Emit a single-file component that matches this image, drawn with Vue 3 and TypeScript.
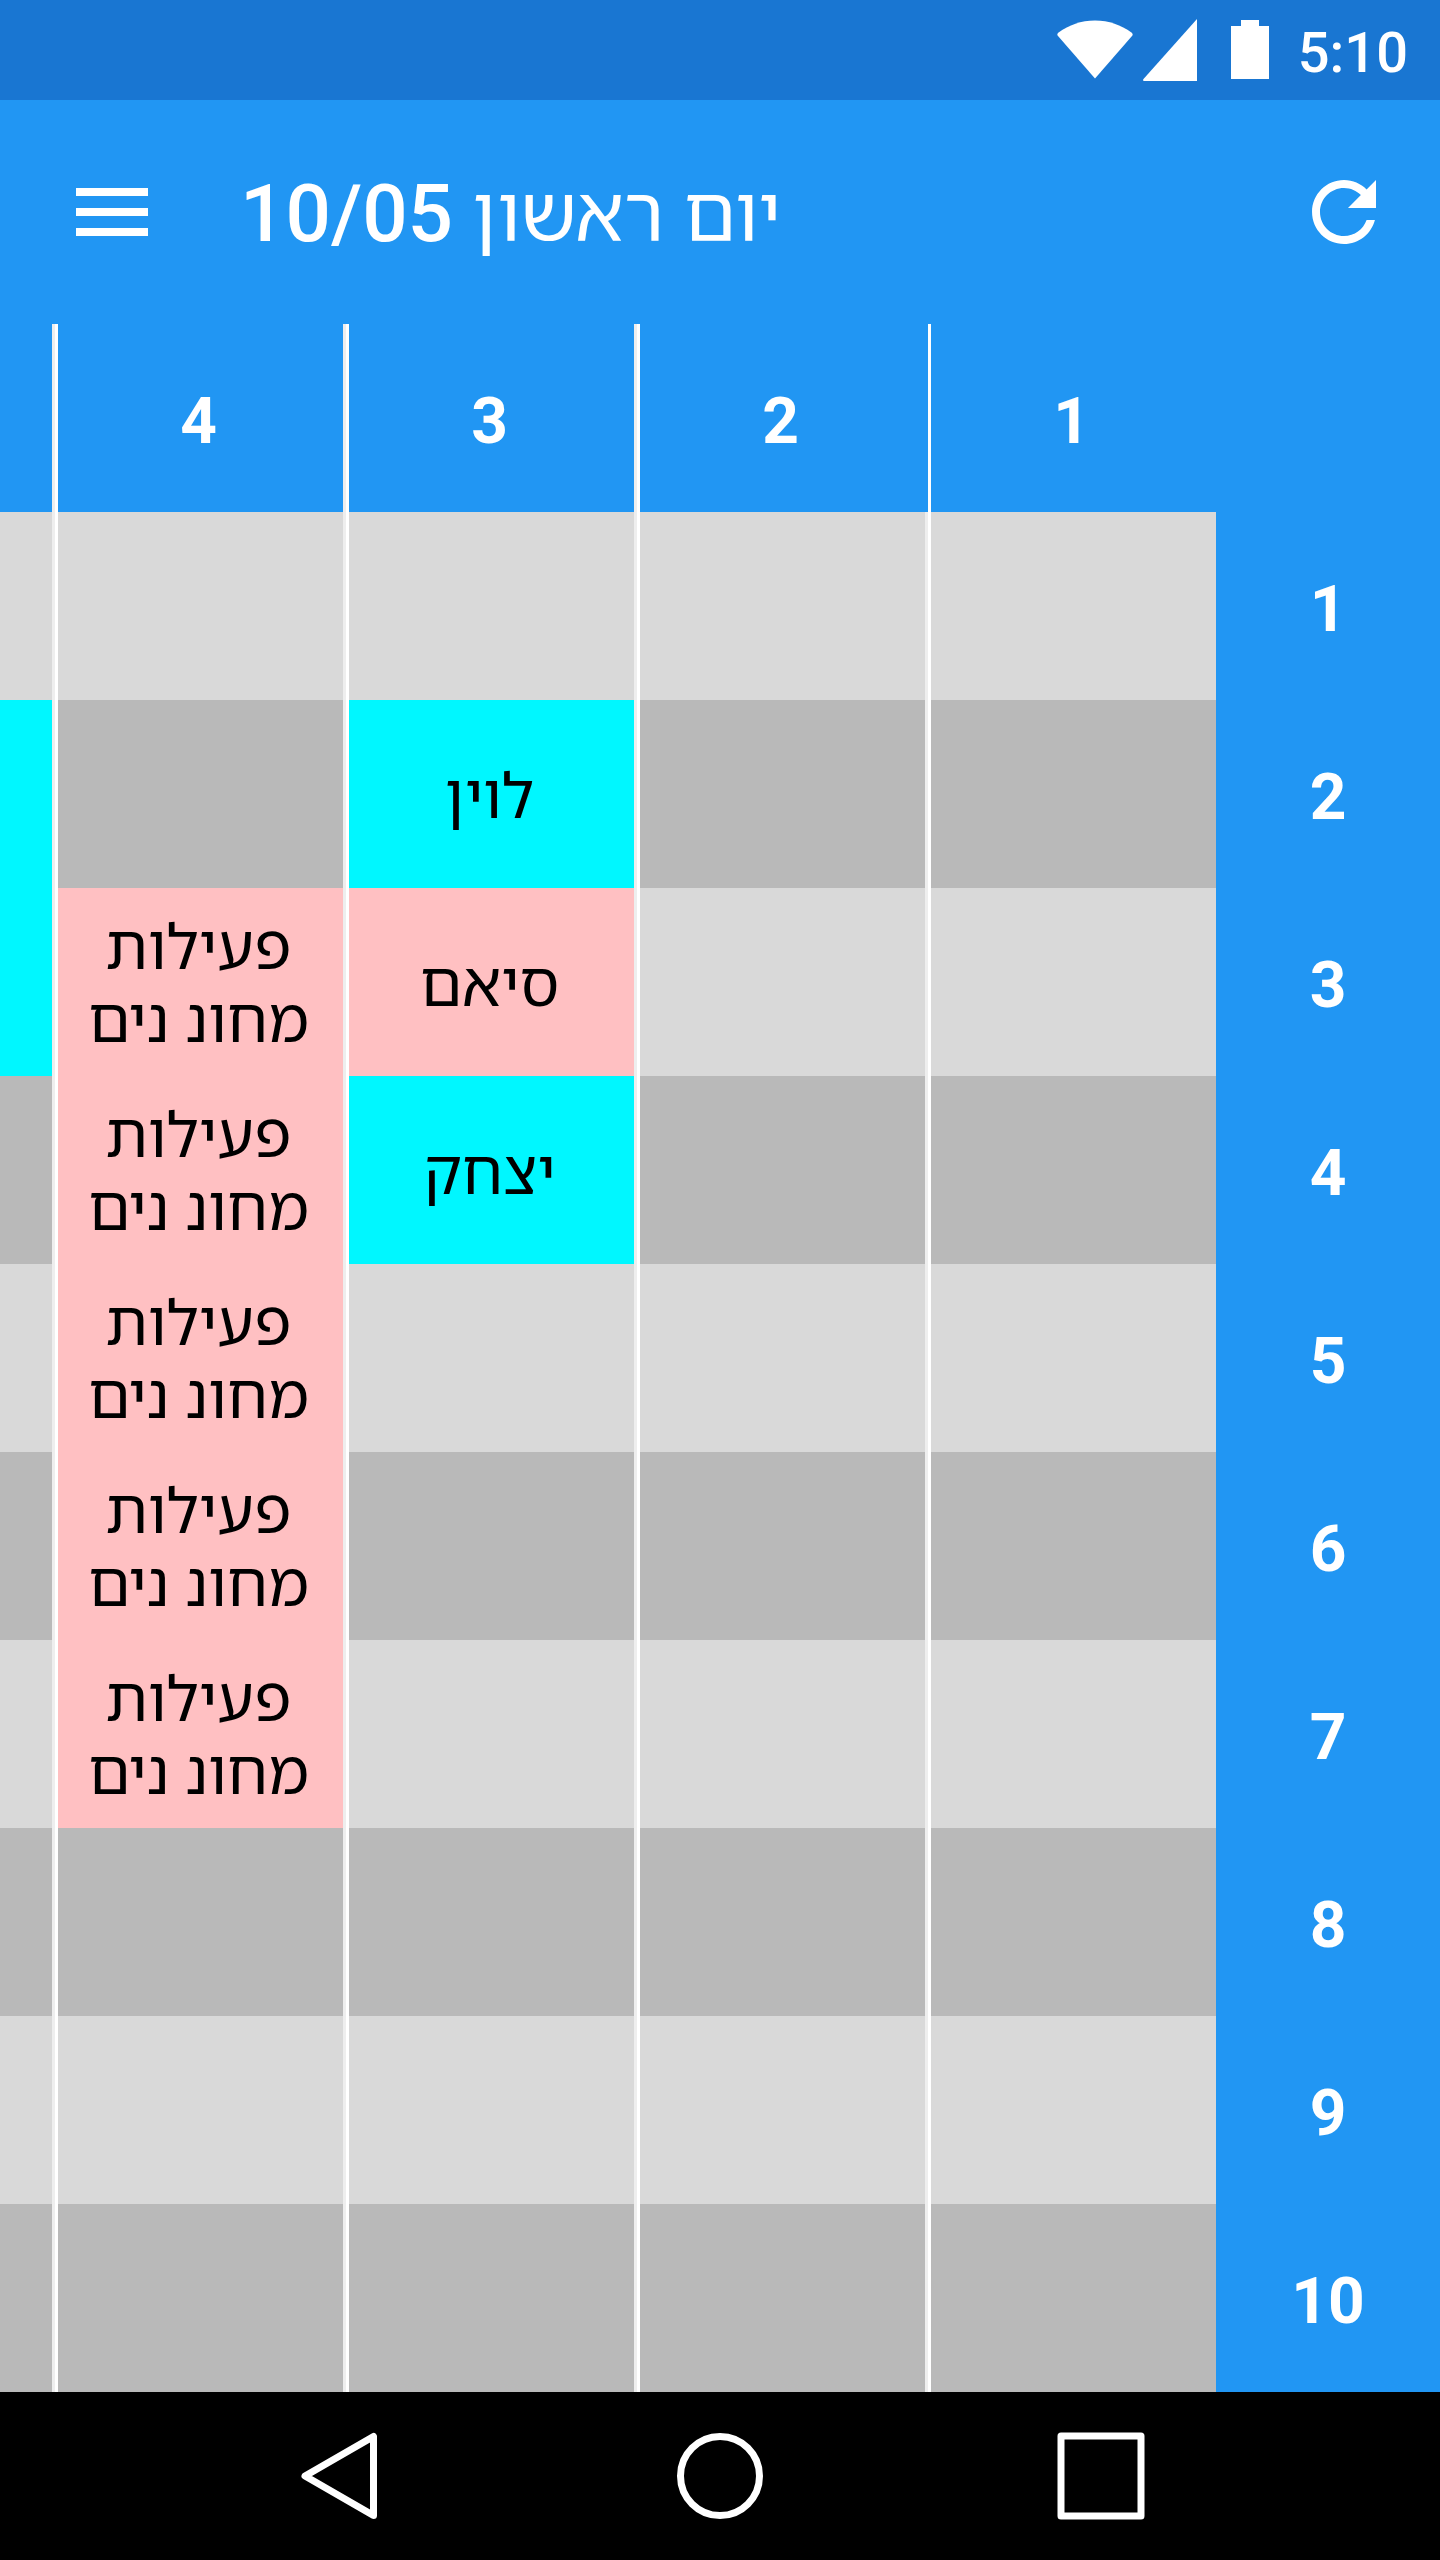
<script setup lang="ts">
interface Entry {
  text: string
  tone: 'cyan' | 'pink'
}

const periods: string[] = ['1', '2', '3', '4', '']
const hours: number[] = [1, 2, 3, 4, 5, 6, 7, 8, 9, 10]

const activity: Entry = { text: 'פעילות מחונ נים', tone: 'pink' }

// Entries are keyed by "<hour>-<column index>".
const entries: Record<string, Entry> = {
  '2-2': { text: 'לוין', tone: 'cyan' },
  '3-2': { text: 'סיאם', tone: 'pink' },
  '4-2': { text: 'יצחק', tone: 'cyan' },
  '3-3': activity,
  '4-3': activity,
  '5-3': activity,
  '6-3': activity,
  '7-3': activity,
  '2-4': { text: '', tone: 'cyan' },
  '3-4': { text: '', tone: 'cyan' },
}

function entryAt(hour: number, column: number): Entry | undefined {
  return entries[`${hour}-${column}`]
}
</script>

<template>
  <div class="screen">
    <div class="status">
      <svg class="wifi" width="76" height="60" viewBox="0 0 76 60" aria-hidden="true">
        <path d="M38 58.500 1 16C-.2 14.600.2 13.400 1.600 12.400 12 5 24 .5 38 .5S64 5 74.400 12.400C75.800 13.400 76.200 14.600 75 16Z" />
      </svg>
      <svg class="signal" width="54" height="62" viewBox="0 0 54 62" aria-hidden="true">
        <path d="M54 0V62H1.500C0 62-.3 61 .5 60Z" />
      </svg>
      <svg class="battery" width="38" height="60" viewBox="0 0 38 60" aria-hidden="true">
        <path d="M10 0H28V6H38V59H0V6H10Z" />
      </svg>
      <span class="time">5:10</span>
    </div>

    <header class="bar">
      <button type="button" class="icon" aria-label="תפריט">
        <svg width="96" height="96" viewBox="0 0 24 24">
          <path d="M3 18h18v-2H3v2zm0-5h18v-2H3v2zm0-7v2h18V6H3z" />
        </svg>
      </button>
      <h1 class="title" dir="rtl">יום ראשון <span class="date">10/05</span></h1>
      <button type="button" class="icon" aria-label="רענון">
        <svg width="96" height="96" viewBox="0 0 24 24">
          <path d="M17.650 6.350C16.200 4.900 14.210 4 12 4c-4.420 0-7.990 3.580-7.990 8s3.570 8 7.990 8c3.730 0 6.840-2.550 7.730-6h-2.080c-.82 2.330-3.040 4-5.650 4-3.310 0-6-2.690-6-6s2.690-6 6-6c1.660 0 3.140.69 4.220 1.780L13 11h7V4l-2.350 2.350z" />
        </svg>
      </button>
    </header>

    <main class="board" dir="rtl">
      <table>
        <colgroup>
          <col class="rail-col" />
          <col class="first-col" />
          <col class="period-col" />
          <col class="period-col" />
          <col class="period-col" />
          <col />
        </colgroup>
        <thead>
          <tr>
            <td class="corner"></td>
            <th v-for="(period, i) in periods" :key="i" scope="col">{{ period }}</th>
          </tr>
        </thead>
        <tbody>
          <tr v-for="hour in hours" :key="hour">
            <th class="rail" scope="row">{{ hour }}</th>
            <td v-for="(period, i) in periods" :key="i" :class="entryAt(hour, i)?.tone">
              {{ entryAt(hour, i)?.text }}
            </td>
          </tr>
        </tbody>
      </table>
    </main>

    <nav class="nav">
      <button type="button" aria-label="חזרה">
        <svg width="96" height="96" viewBox="0 0 96 96">
          <path d="M14 48 82.500 8.500V87.500Z" />
        </svg>
      </button>
      <button type="button" aria-label="בית">
        <svg width="96" height="96" viewBox="0 0 96 96">
          <circle cx="48" cy="48" r="39.500" />
        </svg>
      </button>
      <button type="button" aria-label="אחרונים">
        <svg width="96" height="96" viewBox="0 0 96 96">
          <rect x="8" y="8" width="80" height="80" />
        </svg>
      </button>
    </nav>
  </div>
</template>

<style>
body {
  margin: 0;
  background: #000;
}
</style>

<style scoped>
.screen {
  display: flex;
  flex-direction: column;
  min-height: 100vh;
  font-family: Roboto, "Noto Sans Hebrew", "Noto Sans", sans-serif;
  color: #fff;
}

svg {
  display: block;
  flex: none;
  fill: currentColor;
}

button {
  display: flex;
  align-items: center;
  justify-content: center;
  margin: 0;
  padding: 0;
  border: 0;
  background: none;
  color: inherit;
}

.status {
  display: flex;
  align-items: center;
  justify-content: flex-end;
  height: 100px;
  padding-right: 32px;
  background: #1976d2;
}

.signal {
  margin-left: 10px;
}

.battery {
  margin: 0 29px 0 34px;
}

.time {
  padding-top: 6px;
  font-size: 56px;
  font-weight: 500;
  line-height: 64px;
}

.bar {
  display: flex;
  align-items: center;
  height: 224px;
  padding: 0 48px 0 64px;
  background: #2196f3;
}

.title {
  flex: none;
  margin: 0 auto 0 80px;
  padding-top: 4px;
  font-size: 77px;
  font-weight: 400;
  line-height: 96px;
  white-space: nowrap;
}

.date {
  font-size: 80px;
  font-weight: 500;
}

.board {
  overflow: hidden;
  background: #2196f3;
}

table {
  width: 100%;
  table-layout: fixed;
  border-collapse: separate;
  border-spacing: 0;
  font-size: 62px;
  line-height: 73px;
}

.rail-col {
  width: 224px;
}

.first-col {
  width: 288px;
}

.period-col {
  width: 291px;
}

th,
td {
  box-sizing: border-box;
  height: 188px;
  padding: 6px 0 0;
  border: 0 solid #fff;
  border-left-width: 3px;
  border-right: 3px solid #eee;
  text-align: center;
  vertical-align: middle;
}

td {
  padding: 4px 4px 0 0;
}

th {
  font-size: 64px;
  font-weight: 700;
}

thead th {
  padding-right: 4px;
}

.corner,
.rail {
  border: 0;
}

thead th:nth-child(2),
tbody td:nth-child(2) {
  border-right: 0;
}

thead th:nth-child(3) {
  border-right-color: transparent;
}

th:last-child,
td:last-child {
  border-left: 0;
}

tbody td {
  background: #d9d9d9;
  color: #000;
}

tbody tr:nth-child(even) td {
  background: #b9b9b9;
}

tbody tr td.cyan {
  background: #00f7ff;
}

tbody tr td.pink {
  background: #ffc0c2;
}

.nav {
  display: flex;
  justify-content: center;
  height: 168px;
  background: #000;
}

.nav button {
  width: 381px;
}

.nav svg {
  fill: none;
  stroke: currentColor;
  stroke-width: 7;
  stroke-linejoin: round;
}
</style>
